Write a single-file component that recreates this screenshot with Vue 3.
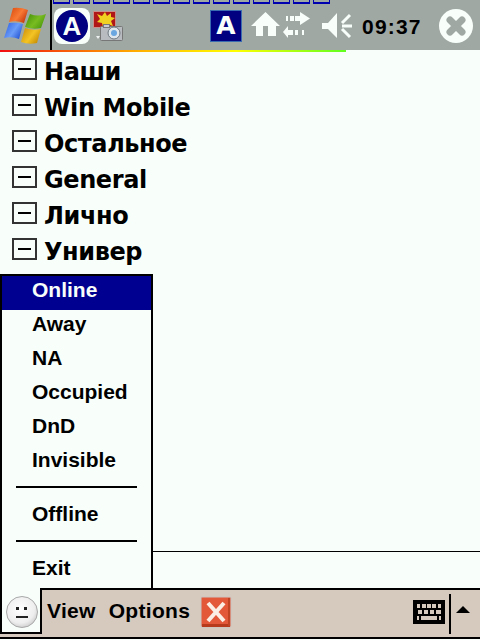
<template>
  <div class="screen">
    <header class="topbar">
      <div class="start">
        <svg width="50" height="50" viewBox="0 0 50 50">
          <defs>
            <linearGradient id="red" x1="0" y1="0" x2="1" y2="0.6">
              <stop offset="0" stop-color="#d8480c" />
              <stop offset="0.6" stop-color="#f87a34" />
              <stop offset="1" stop-color="#c83c10" />
            </linearGradient>
            <linearGradient id="green" x1="0" y1="0" x2="1" y2="0.6">
              <stop offset="0" stop-color="#3f8a08" />
              <stop offset="0.6" stop-color="#78bc20" />
              <stop offset="1" stop-color="#4e9a10" />
            </linearGradient>
            <linearGradient id="blue" x1="0" y1="0" x2="1" y2="0.6">
              <stop offset="0" stop-color="#2a5ce0" />
              <stop offset="0.6" stop-color="#6a9cf8" />
              <stop offset="1" stop-color="#2c5cd8" />
            </linearGradient>
            <linearGradient id="yellow" x1="0" y1="0" x2="1" y2="0.6">
              <stop offset="0" stop-color="#c88a08" />
              <stop offset="0.6" stop-color="#f4c424" />
              <stop offset="1" stop-color="#c89008" />
            </linearGradient>
          </defs>
          <path d="M13 8 Q21 7 28 10 L24 23 Q17 20 9 22 Z" fill="url(#red)" />
          <path d="M30 14 Q38 17 46 14 L41 28 Q33 30 25 27 Z" fill="url(#green)" />
          <path d="M9 23 Q17 22 23 24 L19 39 Q12 36 4 38 Z" fill="url(#blue)" />
          <path d="M25 28 Q33 31 41 29 L37 43 Q29 45 21 42 Z" fill="url(#yellow)" />
        </svg>
      </div>
      <div class="tray">
        <div class="dashes">
          <i v-for="n in 14" :key="n"></i>
        </div>
        <div class="tray-row">
          <div class="aim-wrap"><div class="aim-circle">A</div></div>
          <svg class="cam" width="30" height="32" viewBox="0 0 30 32">
            <rect x="0.5" y="1.500" width="22" height="16" fill="#b01818" stroke="#c89088" />
            <path d="M12 2 L14 6 L18 3 L18 7 L22 8 L18 11 L20 16 L14 14 L10 17 L9 13 L4 12 L7 9 L4 4 L9 6 Z" fill="#f0d020" />
            <rect x="7.500" y="16.500" width="22" height="14" rx="1" fill="#b8bcc0" stroke="#777" />
            <rect x="10.500" y="14.500" width="6" height="3" fill="#c8ccd0" stroke="#777" />
            <circle cx="21" cy="23" r="6" fill="#dfe6ec" stroke="#6f7880" />
            <circle cx="21" cy="23" r="3" fill="#6aa6e0" />
            <path d="M3 26 L7 26 L5 29 Z" fill="#eef2f0" />
          </svg>
          <div class="a-square">A</div>
          <svg class="ico-home" width="31" height="34" viewBox="0 0 31 34">
            <path d="M15.500 3 L30 17 L26 17 L26 27 L18 27 L18 17 L13 17 L13 27 L6 27 L6 17 L1 17 Z" fill="#f8fffb" />
          </svg>
          <svg class="ico-sync" width="28" height="34" viewBox="0 0 28 34">
            <g fill="#f8fffb">
              <rect x="3" y="7" width="2" height="5" /><rect x="7" y="7" width="4" height="5" /><rect x="12" y="7" width="5" height="5" />
              <path d="M17 3 L27 9.500 L17 16 Z" />
              <path d="M0 23 L5 17 L5 29 Z" />
              <rect x="5" y="21" width="5" height="5" /><rect x="12" y="21" width="3" height="5" /><rect x="19" y="21" width="2" height="5" />
            </g>
          </svg>
          <svg class="ico-sound" width="31" height="34" viewBox="0 0 31 34">
            <path d="M0 14 L6 14 L15 4 L15 29 L6 20 L0 20 Z" fill="#f8fffb" />
            <path d="M20 14 L28 6 M20 17 L30 17 M20 20 L28 28" stroke="#f8fffb" stroke-width="3" fill="none" />
          </svg>
          <span class="clock">09:37</span>
          <svg class="ico-close" width="34" height="34" viewBox="0 0 34 34">
            <circle cx="17" cy="17" r="17" fill="#f8fffb" />
            <path d="M11 11 L23 23 M23 11 L11 23" stroke="#a0a8a4" stroke-width="7" stroke-linecap="round" />
          </svg>
        </div>
      </div>
    </header>
    <div class="stripe"></div>

    <main class="content">
      <ul class="tree">
        <li v-for="group in groups" :key="group" class="tree-row">
          <span class="toggle"><i></i></span>
          <span class="label">{{ group }}</span>
        </li>
      </ul>
    </main>

    <footer class="bottombar">
      <div class="smile-slot"></div>
      <span class="cmd">View</span>
      <span class="cmd">Options</span>
      <svg class="x-btn" width="32" height="34" viewBox="0 0 32 34">
        <rect x="1" y="2" width="30" height="30" rx="1" fill="#e4583a" stroke="#c8c4c0" />
        <rect x="2" y="29" width="28" height="3" fill="#b83a1c" />
        <rect x="28" y="3" width="2" height="28" fill="#c04424" />
        <path d="M8 8 L24 26 M24 8 L8 26" stroke="#fbeee4" stroke-width="4" />
      </svg>
      <div class="spacer"></div>
      <svg class="kbd" width="32" height="24" viewBox="0 0 32 24">
        <rect width="32" height="24" fill="#000" />
        <g fill="#d6cabf">
          <rect x="4" y="4" width="3" height="4" /><rect x="9" y="4" width="4" height="4" /><rect x="14" y="4" width="4" height="4" /><rect x="19" y="4" width="4" height="4" /><rect x="25" y="4" width="3" height="4" />
          <rect x="5" y="10" width="4" height="4" /><rect x="11" y="10" width="4" height="4" /><rect x="17" y="10" width="4" height="4" /><rect x="23" y="10" width="5" height="4" />
          <rect x="4" y="16" width="2" height="4" /><rect x="8" y="16" width="16" height="4" /><rect x="26" y="16" width="2" height="4" />
        </g>
      </svg>
      <div class="sep"></div>
      <div class="arrow"></div>
    </footer>

    <div class="menu">
      <template v-for="(item, i) in menu" :key="i">
        <div v-if="item === '-'" class="menu-sep"><i></i></div>
        <div v-else class="menu-item" :class="{ active: item === 'Online' }">{{ item }}</div>
      </template>
    </div>
    <div class="smile-tab">
      <svg width="32" height="32" viewBox="0 0 32 32">
        <defs>
          <radialGradient id="face" cx="0.45" cy="0.4" r="0.65">
            <stop offset="0" stop-color="#ffffff" />
            <stop offset="0.7" stop-color="#eeeeee" />
            <stop offset="1" stop-color="#c8c8c8" />
          </radialGradient>
        </defs>
        <circle cx="16" cy="16" r="15.500" fill="url(#face)" stroke="#a8a8a8" />
        <rect x="10" y="11" width="3" height="3" fill="#222" />
        <rect x="18" y="11" width="3" height="3" fill="#222" />
        <rect x="10" y="20" width="12" height="2" fill="#222" />
      </svg>
    </div>
  </div>
</template>

<script setup>
const groups = ['Наши', 'Win Mobile', 'Остальное', 'General', 'Лично', 'Универ']
const menu = ['Online', 'Away', 'NA', 'Occupied', 'DnD', 'Invisible', '-', 'Offline', '-', 'Exit']
</script>

<style>
body {
  margin: 0;
}
</style>

<style scoped>
.screen {
  position: relative;
  width: 480px;
  height: 640px;
  box-sizing: border-box;
  padding-bottom: 1px;
  overflow: hidden;
  display: flex;
  flex-direction: column;
  background: #f8fffb;
  font-family: "Liberation Sans", sans-serif;
  font-weight: 700;
  color: #000;
}

.topbar {
  height: 50px;
  flex: none;
  display: flex;
  background: #a0a8a4;
}

.start {
  width: 50px;
  height: 50px;
  border-right: 2px solid #000;
}

.start svg {
  display: block;
}

.tray {
  flex: 1;
  display: flex;
  flex-direction: column;
}

.dashes {
  display: flex;
  gap: 3px;
  padding-left: 1px;
  height: 4px;
  flex: none;
}

.dashes i {
  width: 17px;
  height: 4px;
  box-sizing: border-box;
  border: 1px solid #0000b0;
  border-top: 0;
  border-bottom-width: 2px;
}

.tray-row {
  flex: 1;
  display: flex;
  align-items: center;
  padding-bottom: 2px;
}

.aim-wrap {
  width: 36px;
  height: 36px;
  margin-left: 2px;
  border-radius: 8px;
  background: #f8fffb;
  display: flex;
  align-items: center;
  justify-content: center;
}

.aim-circle {
  width: 32px;
  height: 32px;
  border-radius: 50%;
  background: #000080;
  color: #f8fffb;
  font-size: 26px;
  line-height: 32px;
  text-align: center;
}

.cam {
  margin-left: 3px;
}

.a-square {
  width: 32px;
  height: 32px;
  margin-left: 87px;
  background: #000080;
  border: 1px solid #3a6ab0;
  box-sizing: border-box;
  color: #f8fffb;
  font-family: "DejaVu Sans", sans-serif;
  font-size: 25px;
  line-height: 30px;
  text-align: center;
}

.ico-home {
  margin-left: 8px;
}

.ico-sync {
  margin-left: 2px;
}

.ico-sound {
  margin-left: 11px;
}

.clock {
  margin-left: 9px;
  width: 60px;
  font-size: 21px;
  letter-spacing: 1.2px;
  line-height: 1;
}

.ico-close {
  margin-left: 17px;
}

.stripe {
  height: 2px;
  width: 346px;
  flex: none;
  background: linear-gradient(to right, #f01010, #ffb000 40%, #ffff00 68%, #60ff20 100%);
}

.content {
  height: 500px;
  flex: none;
  box-sizing: border-box;
  border-bottom: 1px solid #000;
  margin-bottom: 36px;
}

.tree {
  list-style: none;
  margin: 0;
  padding: 0;
}

.tree-row {
  height: 36px;
  display: flex;
  align-items: center;
  gap: 7px;
  padding-left: 12px;
  font-family: "DejaVu Sans", sans-serif;
  font-size: 24px;
  letter-spacing: -0.4px;
}

.label {
  margin-top: 4px;
}

.toggle {
  width: 25px;
  height: 22px;
  margin-bottom: 2px;
  box-sizing: border-box;
  border: 2px solid #333;
  display: flex;
  align-items: center;
  justify-content: center;
}

.toggle i {
  width: 13px;
  height: 2px;
  background: #000;
}

.bottombar {
  height: 51px;
  flex: none;
  box-sizing: border-box;
  border-top: 2px solid #000;
  border-bottom: 2px solid #000;
  background: #d6cabf;
  display: flex;
  align-items: center;
  font-size: 21px;
  letter-spacing: 0.3px;
}

.smile-slot {
  width: 47px;
  flex: none;
}

.cmd {
  margin-right: 13px;
  margin-bottom: 6px;
}

.cmd + .cmd {
  margin-right: 10px;
}

.x-btn {
  margin-bottom: 3px;
}

.spacer {
  flex: 1;
}

.kbd {
  margin-right: 4px;
  margin-bottom: 3px;
}

.sep {
  width: 2px;
  height: 40px;
  background: #000;
}

.arrow {
  margin: 0 10px 8px 5px;
  border-left: 7px solid transparent;
  border-right: 7px solid transparent;
  border-bottom: 7px solid #000;
}

.menu {
  position: absolute;
  left: 0;
  top: 274px;
  width: 153px;
  height: 314px;
  box-sizing: border-box;
  background: #f8fffb;
  border: 2px solid #000;
  border-bottom: 0;
  font-size: 21px;
}

.menu-item {
  height: 34px;
  line-height: 28px;
  padding-left: 30px;
}

.menu-item.active {
  background: #000090;
  color: #f8fffb;
}

.menu-sep {
  height: 20px;
  padding: 6px 0 0 14px;
  box-sizing: border-box;
}

.menu-sep i {
  display: block;
  width: 121px;
  height: 2px;
  background: #000;
}

.smile-tab {
  position: absolute;
  left: 0;
  top: 588px;
  width: 42px;
  height: 46px;
  box-sizing: border-box;
  background: #f8fffb;
  border: 2px solid #000;
  border-top: 0;
  padding: 8px 0 0 4px;
}

.smile-tab svg {
  display: block;
}
</style>
